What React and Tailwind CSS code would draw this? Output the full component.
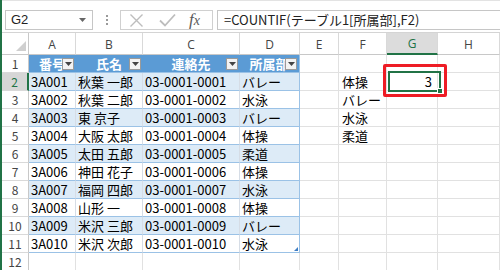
import React from 'react';

const COLS = [
  { key: 'A', w: 'w-[47px]' },
  { key: 'B', w: 'w-[67px]' },
  { key: 'C', w: 'w-[97px]' },
  { key: 'D', w: 'w-[60px]' },
  { key: 'E', w: 'w-[39px]' },
  { key: 'F', w: 'w-[48px]' },
  { key: 'G', w: 'w-[51px]' },
  { key: 'H', w: 'w-[62px]' },
];

const HEADERS = ['番号', '氏名', '連絡先', '所属部'];

const ROWS = [
  ['3A001', '秋葉 一郎', '03-0001-0001', 'バレー'],
  ['3A002', '秋葉 二郎', '03-0001-0002', '水泳'],
  ['3A003', '東 京子', '03-0001-0003', 'バレー'],
  ['3A004', '大阪 太郎', '03-0001-0004', '体操'],
  ['3A005', '太田 五郎', '03-0001-0005', '柔道'],
  ['3A006', '神田 花子', '03-0001-0006', '体操'],
  ['3A007', '福岡 四郎', '03-0001-0007', '水泳'],
  ['3A008', '山形 一', '03-0001-0008', '体操'],
  ['3A009', '米沢 三郎', '03-0001-0009', 'バレー'],
  ['3A010', '米沢 次郎', '03-0001-0010', '水泳'],
];

const SPORTS = ['体操', 'バレー', '水泳', '柔道'];

const jp = "font-['Noto_Sans_CJK_JP',sans-serif]";

function FilterButton() {
  return (
    <span className="absolute right-[2px] top-[3px] w-[12px] h-[12px] bg-[#f3f3f3] border border-[#9a9a9a] flex items-center justify-center">
      <svg width="7" height="4" viewBox="0 0 7 4">
        <path d="M0 0 L7 0 L3.5 4 Z" fill="#444" />
      </svg>
    </span>
  );
}

function RowHeader({ n, active }) {
  return (
    <div
      className={
        'w-[27px] h-[18px] shrink-0 flex items-center justify-center text-[12px] leading-none border-b border-[#d9d9d9] ' +
        (active
          ? 'bg-[#d6d6d6] text-[#217346] border-r-2 border-r-[#217346]'
          : 'bg-white text-[#444] border-r border-r-[#c8c8c8]')
      }
    >
      {n}
    </div>
  );
}

function Cell({ w, className = '', children }) {
  return (
    <div className={`${w} h-[18px] shrink-0 relative flex items-center whitespace-nowrap overflow-hidden ${className}`}>
      {children}
    </div>
  );
}

export default function App() {
  return (
    <div className={`w-[500px] h-[270px] overflow-hidden bg-white border-l-2 border-[#217346] relative ${jp}`}>
      {/* Formula bar */}
      <div className="h-[33px] border-t border-[#e3e3e3] border-b border-b-[#d4d4d4] flex items-start pt-[9px]">
        <div className="ml-[3px] w-[88px] h-[20px] border border-[#c6c6c6] flex items-center pl-[5px] pr-[6px] font-['Liberation_Sans',sans-serif] text-[13px] text-[#222]">
          <span className="flex-1">G2</span>
          <svg width="7" height="4" viewBox="0 0 7 4">
            <path d="M0 0 L7 0 L3.5 4 Z" fill="#666" />
          </svg>
        </div>
        <div className="w-[27px] h-[20px] flex flex-col items-center justify-center gap-[2px]">
          <span className="w-[2px] h-[2px] bg-[#9a9a9a]" />
          <span className="w-[2px] h-[2px] bg-[#9a9a9a]" />
          <span className="w-[2px] h-[2px] bg-[#9a9a9a]" />
        </div>
        <div className="w-[93px] h-[20px] border border-[#d0d0d0] flex items-center">
          <svg className="ml-[8px]" width="15" height="15" viewBox="0 0 15 15">
            <path d="M1.5 1.5 L13.5 13.5 M13.5 1.5 L1.5 13.5" stroke="#bdbdbd" strokeWidth="1.4" fill="none" />
          </svg>
          <svg className="ml-[15px]" width="17" height="14" viewBox="0 0 17 14">
            <path d="M1 7.5 L6 12.5 L16 1.5" stroke="#bdbdbd" strokeWidth="1.8" fill="none" />
          </svg>
          <span className="ml-[13px] font-['Liberation_Serif',serif] italic text-[17px] leading-none text-[#5a5a5a] -mt-[2px]">
            f<span className="text-[14px]">x</span>
          </span>
        </div>
        <div className="ml-[4px] flex-1 h-[20px] border border-[#c6c6c6] border-r-0 flex items-center pl-[6px] text-[13px] text-[#222] whitespace-nowrap">
          =COUNTIF(テーブル1[所属部],F2)
        </div>
      </div>

      {/* Column headers */}
      <div className="flex h-[22px]">
        <div className="w-[27px] shrink-0 relative border-r border-b border-[#c8c8c8]">
          <svg className="absolute right-[2px] bottom-[3px]" width="10" height="10" viewBox="0 0 10 10">
            <path d="M10 0 L10 10 L0 10 Z" fill="#cfcfcf" />
          </svg>
        </div>
        {COLS.map((c) => (
          <div
            key={c.key}
            className={
              `${c.w} shrink-0 flex items-center justify-center pt-[2px] font-['Open_Sans',sans-serif] text-[12px] border-r border-[#d9d9d9] ` +
              (c.key === 'G'
                ? 'bg-[#dcdcdc] text-[#217346] border-b-2 border-b-[#217346]'
                : 'text-[#444] border-b border-b-[#c8c8c8]')
            }
          >
            {c.key}
          </div>
        ))}
      </div>

      {/* Row 1: table header */}
      <div className="flex">
        <RowHeader n={1} />
        {HEADERS.map((h, i) => (
          <Cell
            key={h}
            w={COLS[i].w}
            className={'bg-[#5b9bd5] justify-center text-white font-bold text-[13px] border-b border-[#9bc2e6]' + (i === 3 ? ' border-r border-r-[#9bc2e6]' : '')}
          >
            <span className="pr-[1px]">{h}</span>
            <FilterButton />
          </Cell>
        ))}
        {COLS.slice(4).map((c) => (
          <Cell key={c.key} w={c.w} className="border-r border-b border-[#e1e1e1]" />
        ))}
      </div>

      {/* Data rows */}
      {Array.from({ length: 11 }).map((_, r) => {
        const row = ROWS[r];
        const band = r % 2 === 0;
        const sport = SPORTS[r];
        return (
          <div key={r} className="flex">
            <RowHeader n={r + 2} active={r === 0} />
            {row ? (
              row.map((v, i) => (
                <Cell
                  key={i}
                  w={COLS[i].w}
                  className={
                    'text-[13px] text-black pl-[2px] border-b border-b-[#9bc2e6] ' +
                    (band ? 'bg-[#ddebf7] ' : 'bg-white ') +
                    (i === 3 ? 'border-r border-r-[#9bc2e6]' : 'border-r border-r-[#d6dde6]')
                  }
                >
                  {v}
                  {r === 9 && i === 3 && (
                    <svg className="absolute right-[1px] bottom-[1px]" width="4" height="4" viewBox="0 0 4 4">
                      <path d="M4 0 L4 4 L0 4 Z" fill="#3d7dc4" />
                    </svg>
                  )}
                </Cell>
              ))
            ) : (
              COLS.slice(0, 4).map((c) => (
                <Cell key={c.key} w={c.w} className="border-r border-b border-[#e1e1e1]" />
              ))
            )}
            <Cell w={COLS[4].w} className="border-r border-b border-[#e1e1e1]" />
            <Cell w={COLS[5].w} className="border-r border-b border-[#e1e1e1] pl-[3px] text-[13px] text-black">
              {sport}
            </Cell>
            <Cell w={COLS[6].w} className="border-r border-b border-[#e1e1e1] justify-end pr-[5px] text-[13px] text-black">
              {r === 0 ? '3' : ''}
            </Cell>
            <Cell w={COLS[7].w} className="border-r border-b border-[#e1e1e1]" />
          </div>
        );
      })}

      {/* Active cell G2 */}
      <div className="absolute left-[386px] top-[71px] w-[53px] h-[21px] border-2 border-[#217346] pointer-events-none">
        <span className="absolute -right-[4px] -bottom-[4px] w-[6px] h-[6px] bg-[#217346] border border-white" />
      </div>

      {/* Red annotation */}
      <div className="absolute left-[381px] top-[64px] w-[64px] h-[33px] border-[3px] border-[#ee1c25] rounded-[2px] pointer-events-none" />
    </div>
  );
}
